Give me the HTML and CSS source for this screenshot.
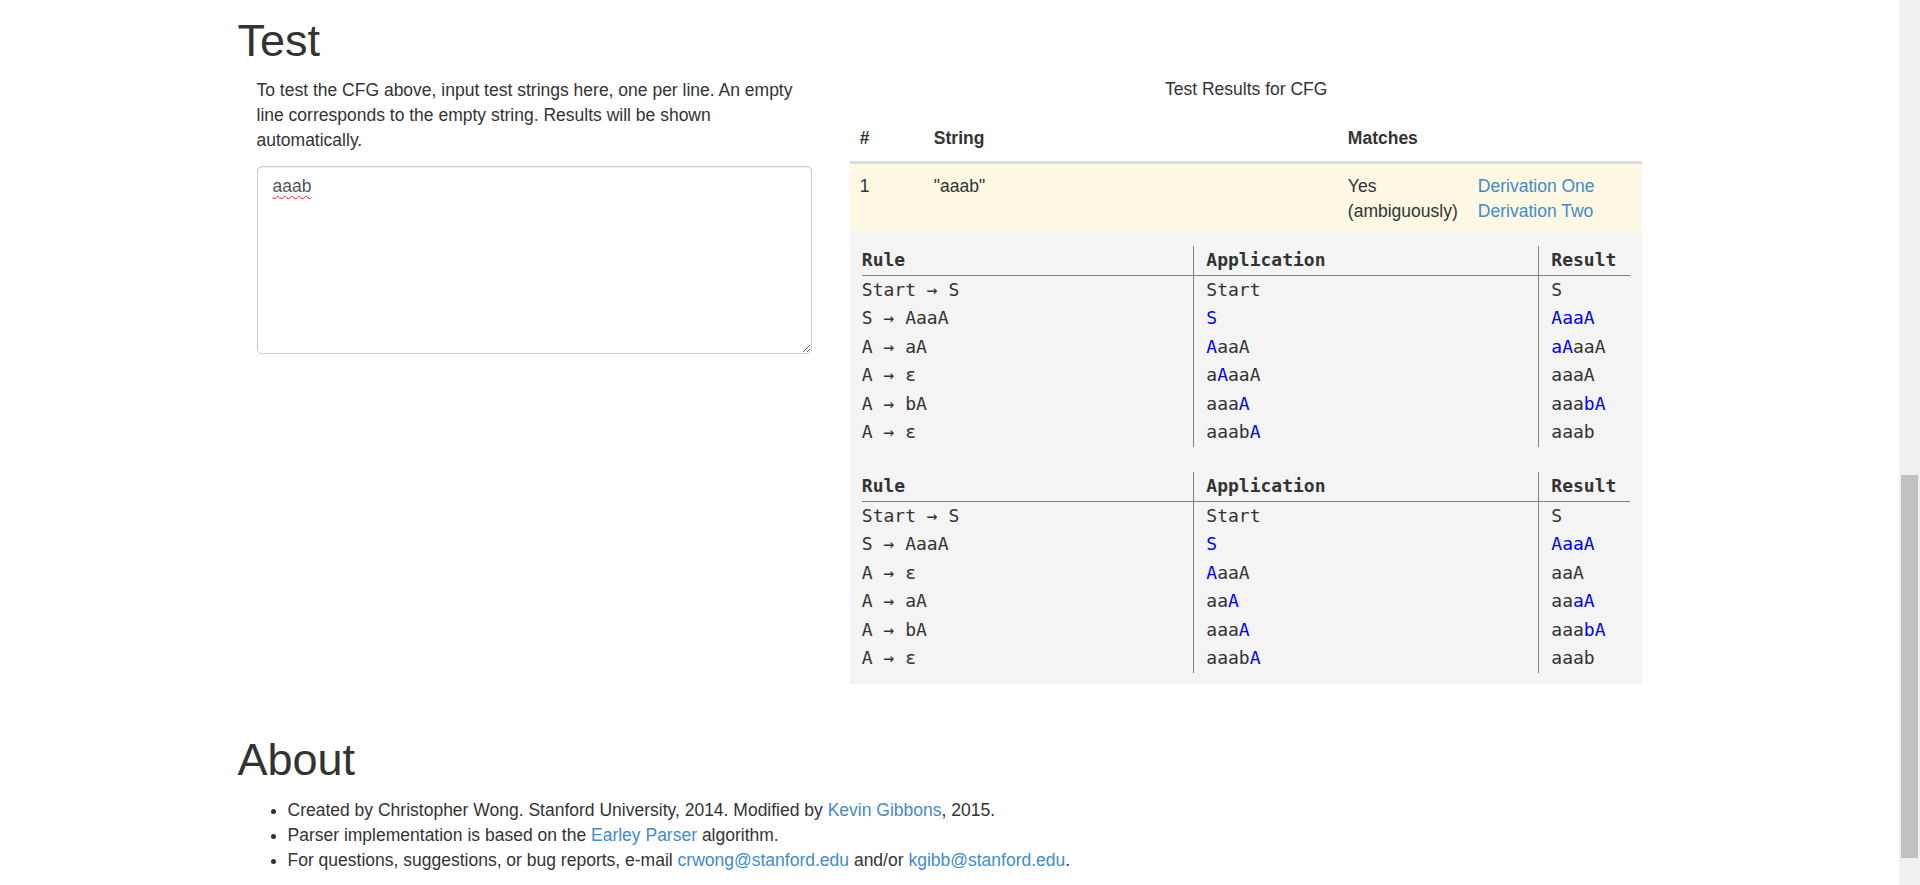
FILE: index.html
```html
<!DOCTYPE html>
<html lang="en">
<head>
<meta charset="utf-8">
<title>CFG Developer</title>
<link rel="stylesheet" href="styles.css">
</head>
<body>
<div class="container">
  <section class="test">
    <h1>Test</h1>
    <div class="row">
      <div class="col col-input">
        <p>To test the CFG above, input test strings here, one per line. An empty line corresponds to the empty string. Results will be shown automatically.</p>
        <textarea class="form-control test-input" spellcheck="false">aaab</textarea>
      </div>
      <div class="col col-results">
        <table class="results">
          <caption>Test Results for CFG</caption>
          <colgroup>
            <col class="c-num"><col class="c-str"><col class="c-match"><col class="c-links">
          </colgroup>
          <thead>
            <tr><th>#</th><th>String</th><th>Matches</th><th></th></tr>
          </thead>
          <tbody>
            <tr class="warning">
              <td>1</td>
              <td>"aaab"</td>
              <td>Yes<br>(ambiguously)</td>
              <td><a href="#d1">Derivation One</a><br><a href="#d2">Derivation Two</a></td>
            </tr>
            <tr class="derivations">
              <td colspan="4">
                <table class="deriv" id="d1">
                  <colgroup><col class="d-rule"><col class="d-app"><col></colgroup>
                  <thead><tr><th>Rule</th><th>Application</th><th>Result</th></tr></thead>
                  <tbody>
                    <tr><td>Start → S</td><td>Start</td><td>S</td></tr>
                    <tr><td>S → AaaA</td><td><span class="hl">S</span></td><td><span class="hl">AaaA</span></td></tr>
                    <tr><td>A → aA</td><td><span class="hl">A</span>aaA</td><td><span class="hl">aA</span>aaA</td></tr>
                    <tr><td>A → ε</td><td>a<span class="hl">A</span>aaA</td><td>aaaA</td></tr>
                    <tr><td>A → bA</td><td>aaa<span class="hl">A</span></td><td>aaa<span class="hl">bA</span></td></tr>
                    <tr><td>A → ε</td><td>aaab<span class="hl">A</span></td><td>aaab</td></tr>
                  </tbody>
                </table>
                <table class="deriv" id="d2">
                  <colgroup><col class="d-rule"><col class="d-app"><col></colgroup>
                  <thead><tr><th>Rule</th><th>Application</th><th>Result</th></tr></thead>
                  <tbody>
                    <tr><td>Start → S</td><td>Start</td><td>S</td></tr>
                    <tr><td>S → AaaA</td><td><span class="hl">S</span></td><td><span class="hl">AaaA</span></td></tr>
                    <tr><td>A → ε</td><td><span class="hl">A</span>aaA</td><td>aaA</td></tr>
                    <tr><td>A → aA</td><td>aa<span class="hl">A</span></td><td>aa<span class="hl">aA</span></td></tr>
                    <tr><td>A → bA</td><td>aaa<span class="hl">A</span></td><td>aaa<span class="hl">bA</span></td></tr>
                    <tr><td>A → ε</td><td>aaab<span class="hl">A</span></td><td>aaab</td></tr>
                  </tbody>
                </table>
              </td>
            </tr>
          </tbody>
        </table>
      </div>
    </div>
  </section>

  <section class="about">
    <h1>About</h1>
    <ul>
      <li>Created by Christopher Wong. Stanford University, 2014. Modified by <a href="#">Kevin Gibbons</a>, 2015.</li>
      <li>Parser implementation is based on the <a href="#">Earley Parser</a> algorithm.</li>
      <li>For questions, suggestions, or bug reports, e-mail <a href="#">crwong@stanford.edu</a> and/or <a href="#">kgibb@stanford.edu</a>.</li>
    </ul>
  </section>
</div>
<div class="scrollbar" aria-hidden="true"><div class="scrollbar-thumb"></div></div>
</body>
</html>
```

FILE: styles.css
```css
html,
body {
  height: 100%;
}

body {
  margin: 0;
  padding-right: 21px;
  box-sizing: border-box;
  overflow: hidden;
  font-family: "Liberation Sans", Arial, Helvetica, sans-serif;
  font-size: 17.5px;
  line-height: 25px;
  color: #333;
  background: #fff;
}

a {
  color: #428bca;
  text-decoration: none;
}

.container {
  width: 1462px;
  margin: 0 auto;
  padding: 0 19px;
  box-sizing: border-box;
}

h1 {
  font-size: 45px;
  font-weight: normal;
  line-height: 1.1;
  margin: 0;
}

p {
  margin: 0 0 12.5px;
}

.test h1 {
  margin: 15.5px 0 13px;
}

.row {
  display: grid;
  grid-template-columns: 5fr 7fr;
}

.col {
  padding: 0 19px;
  min-width: 0;
}

.form-control {
  display: block;
  width: 100%;
  box-sizing: border-box;
  padding: 7.5px 15px;
  border: 1px solid #ccc;
  border-radius: 5px;
  box-shadow: inset 0 1px 1px rgba(0, 0, 0, 0.075);
  font: inherit;
  color: #555;
  background: #fff;
  margin: 0;
}

.test-input {
  height: 188px;
  text-decoration: underline wavy #e0201e;
  text-decoration-thickness: 1px;
  text-underline-offset: 3px;
}

.results {
  width: 100%;
  border-collapse: collapse;
  table-layout: fixed;
  margin-bottom: 25px;
}

.results > caption {
  caption-side: top;
  text-align: center;
  padding: 0 0 13.5px;
  margin-top: -1px;
  color: #333;
}

.c-num { width: 74px; }
.c-str { width: 414px; }
.c-match { width: 130px; }

.results > thead > tr > th,
.results > tbody > tr > td {
  text-align: left;
  vertical-align: top;
  padding: 10px;
}

.results > thead > tr > th {
  font-weight: bold;
  border-bottom: 3px solid #ddd;
}

.results > tbody > tr.warning > td {
  background: #fcf8e3;
  padding: 10px 10px 9px;
}

.results > tbody > tr.derivations > td {
  background: #f4f4f4;
  padding: 13.5px 12px 11.5px;
}

.deriv {
  width: 100%;
  border-collapse: collapse;
  table-layout: fixed;
  font-family: "DejaVu Sans Mono", "Liberation Mono", monospace;
  font-size: 18px;
  line-height: 28.57px;
  color: #333;
}

.deriv + .deriv {
  margin-top: 25px;
}

.d-rule { width: 332px; }
.d-app { width: 345px; }

.deriv th,
.deriv td {
  padding: 0 12px;
  text-align: left;
  white-space: nowrap;
}

.deriv th {
  font-weight: bold;
  border-bottom: 1px solid #808080;
}

.deriv th:first-child,
.deriv td:first-child {
  padding-left: 0;
}

.deriv th + th,
.deriv td + td {
  border-left: 1px solid #808080;
}

.hl {
  color: #0000ff;
}

.about h1 {
  margin: 26px 0 13px;
}

.about ul {
  margin: 0;
  padding: 0 0 0 50px;
}

.scrollbar {
  position: fixed;
  top: 0;
  right: 0;
  bottom: 0;
  width: 21px;
  background: #f1f1f1;
}

.scrollbar-thumb {
  position: absolute;
  top: 475px;
  height: 383px;
  left: 2px;
  right: 2px;
  background: #c1c1c1;
}
```
